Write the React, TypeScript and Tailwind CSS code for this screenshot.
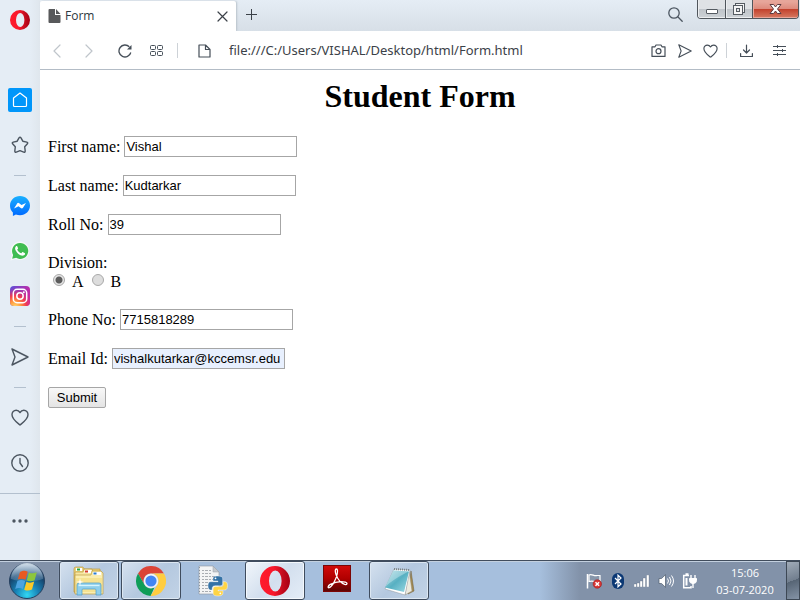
import React from "react";

type Kids = { children: React.ReactNode };

const stroke = { fill: "none", stroke: "currentColor", strokeLinecap: "round", strokeLinejoin: "round" } as const;

function OperaLogo({ className, id }: { className: string; id: string }) {
  return (
    <svg viewBox="0 0 30 30" className={className} aria-hidden="true">
      <defs>
        <linearGradient id={id} x1="0" x2="1" y1="0" y2="0">
          <stop offset="0" stopColor="#ff1b2d" />
          <stop offset="0.450" stopColor="#f8182b" />
          <stop offset="0.750" stopColor="#c40c1e" />
          <stop offset="1" stopColor="#a70014" />
        </linearGradient>
      </defs>
      <path fillRule="evenodd" fill={`url(#${id})`} d="M15 0a15 15 0 1 0 0 30 15 15 0 0 0 0-30Zm.3 4.500a6.300 10.500 0 0 1 0 21 6.300 10.500 0 0 1 0-21Z" />
    </svg>
  );
}

function SideButton({ label, children }: Kids & { label: string }) {
  return (
    <button type="button" aria-label={label} className="flex h-[45px] w-10 items-center justify-center text-[#4c5661]">
      {children}
    </button>
  );
}

function SideSeparator() {
  return (
    <div className="flex h-4 w-full items-center justify-center">
      <div className="h-px w-3 bg-[#b3c0ce]" />
    </div>
  );
}

function HeartIcon({ className }: { className: string }) {
  return (
    <svg viewBox="0 0 18 17" className={className} {...stroke} strokeWidth="1.400">
      <path d="M9 16C6 13.500 1 10 1 5.700A4.200 4.200 0 0 1 5.200 1.300C7 1.300 8.200 2.200 9 3.600c.8-1.400 2-2.300 3.800-2.300A4.200 4.200 0 0 1 17 5.700C17 10 12 13.500 9 16Z" />
    </svg>
  );
}

function SendIcon({ className }: { className: string }) {
  return (
    <svg viewBox="0 0 18 18" className={className} {...stroke} strokeWidth="1.400">
      <path d="M1 1 17 9 1 17 4 9Z" />
    </svg>
  );
}

function Sidebar() {
  return (
    <nav aria-label="Sidebar" className="flex w-10 shrink-0 flex-col items-center bg-[linear-gradient(90deg,#e5edf5_75%,#dfe6ed)]">
      <div className="flex h-10 items-center">
        <OperaLogo id="operaSide" className="size-5" />
      </div>
      <div className="mt-[37px] flex w-full flex-col items-center">
        <SideButton label="Speed Dial">
          <span className="flex size-6 items-center justify-center rounded-xs bg-[#0096fa] text-white">
            <svg viewBox="0 0 16 16" className="size-4" {...stroke} strokeWidth="1.200">
              <path d="M8 1 14.500 6v7.500a1 1 0 0 1-1 1h-11a1 1 0 0 1-1-1V6Z" />
            </svg>
          </span>
        </SideButton>
        <SideButton label="Bookmarks">
          <svg viewBox="0 0 18 18" className="size-[18px]" {...stroke} strokeWidth="1.400">
            <path d="M8 1.900q1-1.400 2 0l1.800 3.300 4 .9q1.500.5.600 1.700l-2.700 3 .5 4.200q0 1.600-1.500 1.100L9 14.600l-3.700 1.500q-1.500.5-1.500-1.100l.5-4.200-2.700-3q-.9-1.200.6-1.700l4-.9Z" />
          </svg>
        </SideButton>
        <SideSeparator />
        <SideButton label="Messenger">
          <svg viewBox="0 0 20 20" className="size-5">
            <defs>
              <linearGradient id="messenger" x1="0" x2="0" y1="0" y2="1">
                <stop offset="0" stopColor="#19b0ff" />
                <stop offset="1" stopColor="#0069ff" />
              </linearGradient>
            </defs>
            <path fill="url(#messenger)" d="M10 0C4.400 0 0 4.100 0 9.600c0 2.900 1 5.300 2.900 7V20l3-1.500c1.200.5 2.600.8 4.100.8 5.600 0 10-4.200 10-9.700S15.600 0 10 0Z" />
            <path fill="#fff" d="m4 12.400 3-4.700a1.500 1.500 0 0 1 2.200-.4l2.300 1.800L16 7l-3 4.700a1.500 1.500 0 0 1-2.200.4L8.500 10.300Z" />
          </svg>
        </SideButton>
        <SideButton label="WhatsApp">
          <svg viewBox="0 0 20 20" className="size-5">
            <path fill="#f6f8f8" d="M10 .5a9.300 9.300 0 0 0-8.200 13.800L.5 19.500l5.200-1.400A9.300 9.300 0 1 0 10 .5Z" />
            <path fill="#40bd51" d="M10 1.900a8 8 0 0 0-6.900 12L2.200 17.800l4-1A8 8 0 1 0 10 1.900Z" />
            <path fill="#fff" d="M7.200 5.300c-.3-.5-.8-.5-1.200-.1-1.500 1.500-1 3.800.8 6 1.900 2.300 4.400 3.900 6.500 3.400 1.300-.4 2-1.300 1.700-2.400l-2.300-1.100c-.4-.1-.6.1-1.100.8-.3.400-.6.300-1 .1-1.500-.7-2.400-1.600-3.200-3-.2-.4 0-.6.3-.9.300-.4.500-.7.300-1.100Z" />
          </svg>
        </SideButton>
        <SideButton label="Instagram">
          <svg viewBox="0 0 20 20" className="size-5">
            <defs>
              <linearGradient id="instaBase" x1="0" x2="1" y1="0" y2="0.300">
                <stop offset="0" stopColor="#5b50d8" />
                <stop offset="1" stopColor="#c52aa5" />
              </linearGradient>
              <radialGradient id="instaWarm" cx="0.250" cy="1.050" r="0.950">
                <stop offset="0" stopColor="#ffdc72" />
                <stop offset="0.300" stopColor="#ff9a3e" />
                <stop offset="0.600" stopColor="#f13c50" />
                <stop offset="1" stopColor="#d02a91" stopOpacity="0" />
              </radialGradient>
            </defs>
            <rect width="20" height="20" rx="4" fill="url(#instaBase)" />
            <rect width="20" height="20" rx="4" fill="url(#instaWarm)" />
            <g fill="none" stroke="#fff" strokeWidth="1.500">
              <rect x="3.300" y="3.300" width="13.400" height="13.400" rx="3.800" />
              <circle cx="10" cy="10" r="3.200" />
            </g>
            <circle cx="13.800" cy="6.200" r="1" fill="#fff" />
          </svg>
        </SideButton>
        <SideSeparator />
        <SideButton label="My Flow"><SendIcon className="size-[18px]" /></SideButton>
        <SideSeparator />
        <SideButton label="Personal news"><HeartIcon className="h-[17px] w-[18px]" /></SideButton>
        <SideButton label="History">
          <svg viewBox="0 0 18 18" className="size-[18px]" {...stroke} strokeWidth="1.400">
            <circle cx="9" cy="9" r="8.200" />
            <path d="M9 4.500V9l2.500 3.500" />
          </svg>
        </SideButton>
      </div>
      <div className="mt-2 w-full border-t border-[#b3c0ce] pt-1">
        <SideButton label="Sidebar setup">
          <svg viewBox="0 0 16 4" className="h-1 w-4" fill="currentColor">
            <circle cx="2" cy="2" r="1.700" />
            <circle cx="8" cy="2" r="1.700" />
            <circle cx="14" cy="2" r="1.700" />
          </svg>
        </SideButton>
      </div>
    </nav>
  );
}

function TabStrip() {
  return (
    <header className="flex h-[31px] items-start bg-linear-to-b from-[#e5edf5] to-[#d7dfe7]">
      <div className="mt-px flex h-[30px] w-[196px] items-center gap-1 rounded-t-xs bg-white px-2 text-[#3b4148] shadow-[1px_0_2px_#b9c2cb]">
        <svg viewBox="0 0 13 14" className="h-3.5 w-[13px]" aria-hidden="true">
          <path fill="#58595b" d="M1.500 0H7v6h5.500v7a1 1 0 0 1-1 1h-10a1 1 0 0 1-1-1V1a1 1 0 0 1 1-1ZM8 0l4.500 5H8Z" />
        </svg>
        <span className="flex-1 text-xs text-[#2d3740]">Form</span>
        <button type="button" aria-label="Close tab">
          <svg viewBox="0 0 11 11" className="size-[11px]" {...stroke} strokeWidth="1.200"><path d="m1 1 9 9M10 1l-9 9" /></svg>
        </button>
      </div>
      <button type="button" aria-label="New tab" className="mt-[9px] ml-2.5 text-[#3b4148]">
        <svg viewBox="0 0 11 11" className="size-[11px]" fill="none" stroke="currentColor"><path d="M5.500 0v11M0 5.500h11" /></svg>
      </button>
      <div className="flex-1" />
      <button type="button" aria-label="Search tabs" className="mt-[7px] mr-3.5 text-[#4c5661]">
        <svg viewBox="0 0 15 15" className="size-[15px]" {...stroke} strokeWidth="1.300">
          <circle cx="6" cy="6" r="5.200" /><path d="m10 10 4.200 4.200" />
        </svg>
      </button>
      <div className="mr-px flex h-[19px] overflow-hidden rounded-b border border-t-0 border-[#50565c]">
        <button type="button" aria-label="Minimize" className="flex w-[27px] items-center justify-center bg-[linear-gradient(#dfe2e5_50%,#bfc4c9_50%,#cdd2d6)] pt-1 shadow-[inset_1px_-1px_0_#eceef0]">
          <span className="h-[5px] w-3 rounded-[1px] border border-[#555b61] bg-white" />
        </button>
        <button type="button" aria-label="Restore" className="flex w-[27px] items-center justify-center border-l border-[#50565c] bg-[linear-gradient(#dfe2e5_50%,#bfc4c9_50%,#cdd2d6)] shadow-[inset_1px_-1px_0_#eceef0]">
          <svg viewBox="0 0 12 12" className="size-3" fill="#f5f5f5" stroke="#555b61">
            <rect x="2.500" y=".5" width="9" height="9" />
            <rect x=".5" y="2.500" width="9" height="9" />
            <rect x="3.500" y="5.500" width="3" height="3" fill="#e4e6e8" />
          </svg>
        </button>
        <button type="button" aria-label="Close" className="flex w-[46px] items-center justify-center border-l border-[#50565c] bg-[linear-gradient(#e7a69a_10%,#dd8a7c_50%,#c2402b_50%,#d77a62)] shadow-[inset_1px_-1px_0_#eaa599]">
          <svg viewBox="0 0 13 12" className="h-3 w-[13px]">
            <path d="M1 1.500h3.600L6.500 4l1.900-2.500H12L8.500 6l3.500 4.500H8.400L6.500 8l-1.900 2.500H1L4.500 6Z" fill="#fff" stroke="#5b3b40" />
          </svg>
        </button>
      </div>
    </header>
  );
}

function ToolButton({ label, className, children }: Kids & { label: string; className: string }) {
  return (
    <button type="button" aria-label={label} className={`flex h-6 shrink-0 items-center justify-center ${className}`}>
      {children}
    </button>
  );
}

function AddressBar() {
  return (
    <div className="flex h-[39px] items-center border-b border-[#b3bcc6] bg-white px-3.5 pt-px text-[#454e58]">
      <div className="flex gap-[19px]">
        <ToolButton label="Back" className="w-[13px] pr-2 text-[#bfc5cb]">
          <svg viewBox="0 0 9 14" className="h-3.5 w-[9px] shrink-0" {...stroke} strokeWidth="1.200"><path d="M8 1 2 7l6 6" /></svg>
        </ToolButton>
        <ToolButton label="Forward" className="w-[13px] pr-2 text-[#bfc5cb]">
          <svg viewBox="0 0 9 14" className="h-3.5 w-[9px] shrink-0" {...stroke} strokeWidth="1.200"><path d="m2 1 6 6-6 6" /></svg>
        </ToolButton>
        <ToolButton label="Reload" className="w-[13px]">
          <svg viewBox="0 0 14 14" className="size-3.5 shrink-0" fill="none" stroke="currentColor" strokeWidth="1.300">
            <path d="M12.800 8.500A6 6 0 1 1 11.300 2.800" /><path fill="currentColor" stroke="none" d="M13.500 1V5.500H9Z" />
          </svg>
        </ToolButton>
        <ToolButton label="Speed Dial" className="w-[13px]">
          <svg viewBox="0 0 13 12" className="h-3 w-[13px]" fill="none" stroke="currentColor">
            <rect x=".5" y=".5" width="5" height="4" rx="1" /><rect x="7.500" y=".5" width="5" height="4" rx="1" />
            <rect x=".5" y="6.500" width="5" height="4" rx="1" /><rect x="7.500" y="6.500" width="5" height="4" rx="1" />
          </svg>
        </ToolButton>
      </div>
      <div className="ml-3.5 h-[15px] w-px bg-[#cdd2d7]" />
      <svg viewBox="0 0 13 14" className="ml-5 h-3.5 w-[13px] shrink-0" {...stroke} strokeWidth="1.200" aria-hidden="true">
        <path d="M1 1h6.500L12 5.500V13H1ZM7.500 1v4.500H12" />
      </svg>
      <input aria-label="Address" defaultValue="file:///C:/Users/VISHAL/Desktop/html/Form.html" className="ml-[18px] min-w-0 flex-1 bg-transparent font-['Noto_Sans',sans-serif] text-[13px] text-[#3b4148] outline-none" />
      <div className="flex gap-[11px]">
        <ToolButton label="Snapshot" className="w-[15px]">
          <svg viewBox="0 0 15 13" className="h-[13px] w-[15px]" {...stroke} strokeWidth="1.200">
            <path d="M1 2.800h3L5 1h5l1 1.800h3V12.400H1Z" /><circle cx="7.500" cy="7.200" r="2.500" />
          </svg>
        </ToolButton>
        <ToolButton label="Send to My Flow" className="w-[15px]"><SendIcon className="size-3.5" /></ToolButton>
        <ToolButton label="Add to bookmarks" className="w-[15px]"><HeartIcon className="h-3.5 w-[15px]" /></ToolButton>
      </div>
      <div className="ml-2 h-[15px] w-px bg-[#cdd2d7]" />
      <ToolButton label="Downloads" className="ml-[13px] w-[13px]">
        <svg viewBox="0 0 13 13" className="size-[13px]" {...stroke} strokeWidth="1.200">
          <path d="M6.500 1v8M3.500 6l3 3 3-3M.600 9.500v3h11.800v-3" />
        </svg>
      </ToolButton>
      <ToolButton label="Easy setup" className="ml-5 w-[13px]">
        <svg viewBox="0 0 13 12" className="h-3 w-[13px]" fill="none" stroke="currentColor">
          <path d="M0 1.500h13M0 5.500h13M0 9.500h13M4.500 0v3M9.500 4v3M4.500 8v3" />
        </svg>
      </ToolButton>
    </div>
  );
}

function Field({ id, label, value, type = "text", filled = false }: { id: string; label: string; value: string; type?: string; filled?: boolean }) {
  return (
    <div className="flex h-[21px] items-center gap-1">
      <label htmlFor={id}>{label}</label>
      <input
        id={id}
        type={type}
        defaultValue={value}
        className={`h-[21px] w-[173px] border border-[#a6a6a6] px-px font-['Liberation_Sans',Arial,sans-serif] text-[13px] outline-none ${filled ? "bg-[#e8f0fe]" : "bg-white"}`}
      />
    </div>
  );
}

function Choice({ label, checked = false }: { label: string; checked?: boolean }) {
  return (
    <label className="flex items-center gap-[7px]">
      <input
        type="radio"
        name="division"
        defaultChecked={checked}
        className="mb-1 size-3 appearance-none rounded-full border border-[#a9a9a9] bg-[#dddddd] checked:bg-[radial-gradient(circle,#5c5c5c_0_3px,#e6e6e6_4px)]"
      />
      {label}
    </label>
  );
}

function StudentForm() {
  return (
    <main className="flex-1 overflow-hidden bg-white px-2 pt-2 font-['Liberation_Serif','Times_New_Roman',serif] text-base text-black">
      <h1 className="mb-[22px] text-center text-[32px] leading-9 font-bold">Student Form</h1>
      <form className="flex flex-col items-start gap-[18px]" onSubmit={(e) => e.preventDefault()}>
        <Field id="first" label="First name:" value="Vishal" />
        <Field id="last" label="Last name:" value="Kudtarkar" />
        <Field id="roll" label="Roll No:" value="39" />
        <fieldset className="leading-[19px]">
          <legend>Division:</legend>
          <div className="flex gap-2 pl-[5px]">
            <Choice label="A" checked />
            <Choice label="B" />
          </div>
        </fieldset>
        <Field id="phone" label="Phone No:" value="7715818289" type="tel" />
        <Field id="email" label="Email Id:" value="vishalkutarkar@kccemsr.edu" type="email" filled />
        <button type="submit" className="h-[21px] w-[58px] rounded-[2px] border border-[#a6a6a6] bg-linear-to-b from-[#f8f8f8] to-[#e4e4e4] font-['Liberation_Sans',Arial,sans-serif] text-[13px] leading-[19px]">
          Submit
        </button>
      </form>
    </main>
  );
}

function TaskButton({ label, open = false, active = false, children }: Kids & { label: string; open?: boolean; active?: boolean }) {
  const face = active
    ? "border-[#3f4c5e] bg-[linear-gradient(135deg,#f1f6fb,#d3dfee_50%,#e4edf7)] shadow-[inset_0_0_0_1px_#f4f8fc]"
    : open
      ? "border-[#3f4c5e] bg-[linear-gradient(135deg,#d5e1ef,#b4c8df_50%,#c2d3e6)] shadow-[inset_0_0_0_1px_#dce7f2]"
      : "border-transparent";
  return (
    <button type="button" aria-label={label} className={`flex h-[39px] w-[60px] items-center justify-center rounded-[3px] border ${face}`}>
      {children}
    </button>
  );
}

function StartOrb() {
  return (
    <svg viewBox="0 0 38 38" className="size-[38px]">
      <defs>
        <radialGradient id="orb" cx="0.500" cy="0.900" r="0.850">
          <stop offset="0" stopColor="#31d7f3" />
          <stop offset="0.400" stopColor="#1780b4" />
          <stop offset="0.750" stopColor="#16446c" />
          <stop offset="1" stopColor="#5e7b98" />
        </radialGradient>
        <linearGradient id="orbGloss" x1="0" x2="0" y1="0" y2="1">
          <stop offset="0" stopColor="#e8f2fa" stopOpacity="0.850" />
          <stop offset="1" stopColor="#a6c4df" stopOpacity="0.200" />
        </linearGradient>
      </defs>
      <circle cx="19" cy="19" r="17.500" fill="url(#orb)" stroke="#253f5e" />
      <path fill="url(#orbGloss)" d="M3 17A16 16 0 0 1 35 17C27 20 11 20 3 17Z" />
      <path fill="#e85a22" d="M12 10c3-1.800 5.500-1.600 7.700-.3l-2.200 8c-2.600-1.400-5-1.400-7.700-.1Z" />
      <path fill="#8cc63e" d="M20.900 10.400c2.600 1.300 5.100 1.100 7.900-.2l-2.200 8c-2.800 1.300-5.300 1.300-7.800.1Z" />
      <path fill="#4da3e0" d="M9.400 19c2.700-1.300 5.100-1.300 7.700.1l-2.200 8c-2.600-1.400-5-1.400-7.700-.1Z" />
      <path fill="#fbc928" d="M18.400 19.700c2.600 1.300 5.100 1.200 7.800-.1l-2.200 8c-2.800 1.300-5.300 1.300-7.800.1Z" />
    </svg>
  );
}

function ExplorerIcon() {
  return (
    <svg viewBox="0 0 32 30" className="h-[30px] w-8">
      <path fill="#ecd27c" stroke="#bd9c42" strokeWidth=".7" d="M1 3q0-2 2-2h7l1 2h16v23H1Z" />
      <path fill="#fff" d="M3 2h6v3H3Z" /><path fill="#26a43c" d="M4 2.500h3v2H4Z" />
      <path fill="#f7e7a3" stroke="#bd9c42" strokeWidth=".7" d="M2 6h8l1-3h8l1 3h8v21H2Z" />
      <path fill="#fff" d="M11.500 4h7v3h-7Z" /><path fill="#d53b2a" d="M12 4.500h3v2h-3Z" />
      <path fill="#fbeeb0" stroke="#bd9c42" strokeWidth=".7" d="M2 9h16l1-4h9l2 2v21H2Z" />
      <path fill="#fff" d="M20 6h8v3h-8Z" /><path fill="#2b7bd1" d="M20.500 6.500h3v2h-3Z" />
      <path fill="#f4dd85" d="M3 12h26v14H3Z" opacity=".7" />
      <path fill="#8fcfec" stroke="#4e9bc8" strokeWidth=".7" d="M4 29V19q0-2 2-2h20q2 0 2 2v10h-5v-5q0-1-1-1H10q-1 0-1 1v5Z" />
      <path stroke="#d7f3ff" strokeWidth="1.300" d="M5.500 19.500h21" />
      <path fill="#fff" d="m7 12 .7 3.300 3.300.7-3.300.7L7 20l-.7-3.300L3 16l3.300-.7Z" />
    </svg>
  );
}

function ChromeIcon() {
  return (
    <svg viewBox="0 0 30 30" className="size-[30px]">
      <path fill="#db4437" d="M2 7.500A15 15 0 0 1 28 7.500H15a7.500 7.500 0 0 0-6.500 11.250Z" />
      <path fill="#0f9d58" d="M2 7.500 8.500 18.750A7.500 7.500 0 0 0 15 22.500l3.300-.8L14.600 30A15 15 0 0 1 2 7.500Z" />
      <path fill="#ffcd40" d="M28 7.500A15 15 0 0 1 14.600 30l6.900-11.250A7.500 7.500 0 0 0 15 7.500Z" />
      <circle cx="15" cy="15" r="7.200" fill="#f4f4f4" />
      <circle cx="15" cy="15" r="5.600" fill="#4285f4" />
    </svg>
  );
}

function PythonFileIcon() {
  return (
    <svg viewBox="0 0 32 32" className="size-8">
      <path fill="#f3f4f5" stroke="#8d949d" strokeWidth=".6" d="M2 1h14l6 6v22H2Z" />
      <path fill="#c5c9ce" stroke="#9ba1a8" strokeWidth=".5" d="M16 1v6h6Z" />
      <path stroke="#a9adb2" strokeDasharray="2 1 3 1" d="M5 5.500h9M5 8.500h10M5 11.500h14M5 14.500h14M5 17.500h14M5 20.500h14M5 23.500h9M5 26.500h9" />
      <path stroke="#8f959c" strokeDasharray="1 2" d="M2.500 2v27" />
      <path fill="#3472a6" stroke="#fff" strokeWidth=".4" d="M16 16v-2.300c0-2 1.300-2.700 5-2.700 3 0 4.700.8 4.700 2.800v4.500c0 1.500-1 2.500-2.500 2.500H18c-1.800 0-2.800 1-2.800 2.800V25h-1.800C11.600 25 11 23 11 20.600c0-2.500.8-3.900 2.800-3.900H21V16Z" />
      <path fill="#ffd445" stroke="#fff" strokeWidth=".4" d="M26 16.700h2c1.700 0 2.500 1.500 2.500 4 0 2.600-.8 4.300-2.700 4.300H21v.8h5v2.300c0 1.700-1.500 2.900-5 2.900-3.200 0-4.900-1-4.900-2.800v-4c0-1.700.8-2.600 2.600-2.600H24c1.500 0 2.300-1 2.300-2.600Z" />
      <circle cx="18.500" cy="13.300" r=".9" fill="#fff" /><circle cx="23.300" cy="28.300" r=".9" fill="#fff" />
    </svg>
  );
}

function AcrobatIcon() {
  return (
    <svg viewBox="0 0 28 28" className="mb-1 size-7">
      <defs>
        <linearGradient id="acrobat" x1="0" x2="0" y1="0" y2="1">
          <stop offset="0" stopColor="#d20a0a" /><stop offset=".5" stopColor="#b00000" /><stop offset="1" stopColor="#5a0505" />
        </linearGradient>
      </defs>
      <rect x=".5" y=".5" width="27" height="26" fill="url(#acrobat)" stroke="#7b0505" />
      <path fill="none" stroke="#fff" strokeWidth="1.300" d="M13.500 4c-1.700 0-1.500 2.700-.3 6 1.400 4 5 8.300 8.500 9.400 2.500.6 3.300-1.600.6-2.300-4.300-1-11 .2-15 2.300-2.800 1.600-2.600 3.700-1.200 3.300 3-1 7-8 8.100-13.700.5-3 .4-5-.7-5Z" />
    </svg>
  );
}

function NotepadIcon() {
  return (
    <svg viewBox="0 0 32 30" className="h-[30px] w-8">
      <defs>
        <linearGradient id="pad" x1="0" x2="1" y1="0" y2="1">
          <stop offset="0" stopColor="#b7dfe7" /><stop offset=".5" stopColor="#57b0c2" /><stop offset="1" stopColor="#9edbe5" />
        </linearGradient>
      </defs>
      <path fill="#a38a50" stroke="#6c5d3a" strokeWidth=".5" d="M28 5 31 25l-6 3Z" />
      <path fill="#eceade" stroke="#948f7c" strokeWidth=".5" d="m26 4 3 21-7 4Z" />
      <path fill="#fff" stroke="#8f979d" strokeWidth=".5" d="m11 3 16 1-5 25L2 23Z" />
      <path fill="url(#pad)" d="m10.500 4.500 15.500 1L21 26 2 21.500Z" />
      <path fill="#d9f0f4" opacity=".4" d="m10.500 4.500 15 1q-8 4-14 8t-9 7Z" />
      <path stroke="#7b8388" strokeDasharray="1 1" strokeWidth="2" d="m11 3 16 1" />
    </svg>
  );
}

function Tray() {
  return (
    <div className="flex items-center gap-2 text-white">
      <svg viewBox="0 0 16 16" className="size-4">
        <path fill="none" stroke="#fff" strokeWidth="1.500" d="M1.500 1v14.500" />
        <path fill="#8796aa" stroke="#fff" strokeWidth="1.200" d="M3 2c3-1.500 5 1.500 8 .5h3V9c-3 1-6-2-11-.5Z" />
        <circle cx="11.300" cy="11" r="4.200" fill="#d93634" stroke="#9e191b" strokeWidth=".6" />
        <path stroke="#fff" strokeWidth="1.500" d="m9.500 9.200 3.600 3.600m0-3.600-3.600 3.600" />
      </svg>
      <svg viewBox="0 0 16 16" className="size-4">
        <rect x="2" width="12" height="16" rx="6" fill="#0b3874" />
        <path fill="none" stroke="#fff" strokeWidth="1.200" d="m5 5 6 6-3 2.800V2.200L11 5l-6 6" />
      </svg>
      <svg viewBox="0 0 16 12" className="h-3 w-4" fill="#fff" stroke="#58677b" strokeWidth=".3">
        <path d="M0 9h2.500v3H0ZM3 8h2.500v4H3ZM6 6h2.500v6H6ZM9 3h2.500v9H9ZM12.500 0H15v12h-2.500Z" />
      </svg>
      <svg viewBox="0 0 16 14" className="h-3.5 w-4" fill="none" stroke="#fff">
        <path fill="#fff" stroke="#4f5c6d" strokeWidth=".7" d="M1 4.500h2.500L7.500.7v12.600L3.500 9.500H1Z" />
        <path d="M9.500 4.500q2 2.500 0 5M11.500 3q3 4 0 8M13.500 1.500q4 5.500 0 11" />
      </svg>
      <svg viewBox="0 0 16 16" className="size-4" fill="none" stroke="#fff">
        <path strokeWidth="1.500" d="M7 2.500H1.700v12.300H9V13M3.500 1h3" />
        <path d="M4.500 5v7.500" strokeWidth="2" />
        <path fill="#fff" d="M7.500 5.500h7v2q0 3-3.500 3t-3.500-3Z" />
        <path strokeWidth="1.400" d="M9 2v3.500M13 2v3.500M11 10v5" />
      </svg>
    </div>
  );
}

function Taskbar() {
  return (
    <footer className="flex h-10 shrink-0 items-center border-t border-[#414d5d] bg-[linear-gradient(90deg,#8292a9_58px,#a6bfdd_62px,#a6bfdd_calc(100%-260px),#8292a9_calc(100%-220px))] font-['Open_Sans','Noto_Sans',sans-serif] shadow-[inset_0_1px_0_#c3d0df]">
      <button type="button" aria-label="Start" className="mr-[13px] ml-2"><StartOrb /></button>
      <div className="flex gap-0.5">
        <TaskButton label="Windows Explorer" open><ExplorerIcon /></TaskButton>
        <TaskButton label="Google Chrome" open><ChromeIcon /></TaskButton>
        <TaskButton label="Python"><PythonFileIcon /></TaskButton>
        <TaskButton label="Opera" open active><OperaLogo id="operaTask" className="size-[30px]" /></TaskButton>
        <TaskButton label="Adobe Reader"><AcrobatIcon /></TaskButton>
        <TaskButton label="Notepad" open><NotepadIcon /></TaskButton>
      </div>
      <div className="flex-1" />
      <Tray />
      <button type="button" className="mr-2.5 ml-4 w-[62px] text-center text-[11px] leading-[17px] whitespace-nowrap text-white">
        <span className="block">15:06</span>
        <span className="block">03-07-2020</span>
      </button>
      <button type="button" aria-label="Show desktop" className="h-[39px] w-3.5 border border-[#3d4855] bg-[linear-gradient(160deg,#a0abb8,#717e8e_50%,#566474_50%,#8493a6)]" />
    </footer>
  );
}

export default function App() {
  return (
    <div className="flex h-screen flex-col overflow-hidden bg-white font-['Open_Sans','Noto_Sans',sans-serif]">
      <div className="flex min-h-0 flex-1">
        <Sidebar />
        <div className="flex min-w-0 flex-1 flex-col">
          <TabStrip />
          <AddressBar />
          <StudentForm />
        </div>
      </div>
      <Taskbar />
    </div>
  );
}
